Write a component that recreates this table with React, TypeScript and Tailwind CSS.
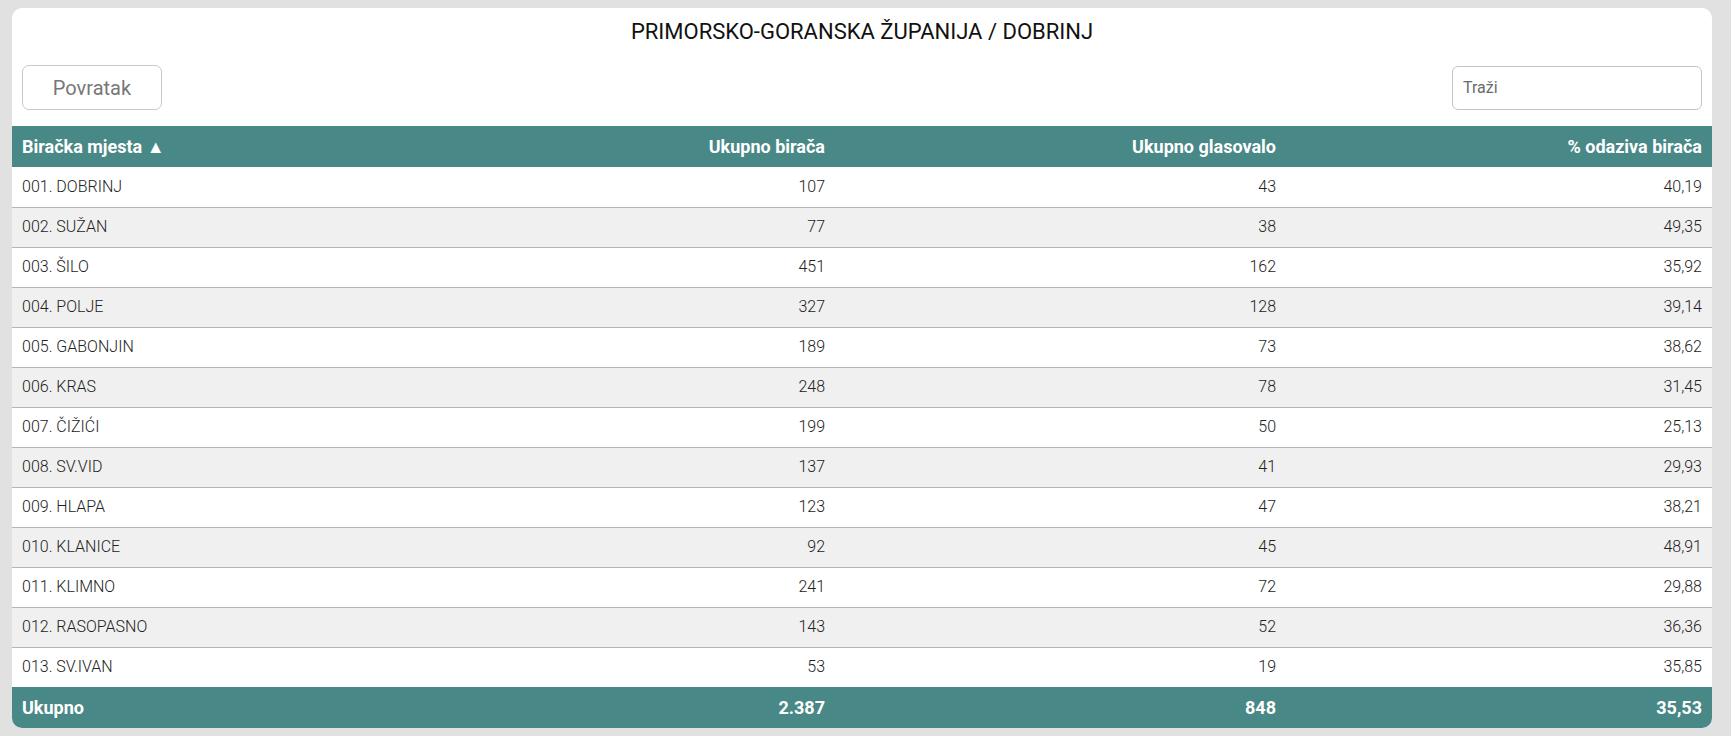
import React from 'react'

interface Row {
    name: string
    voters: string
    voted: string
    turnout: string
}

const rows: Row[] = [
    { name: '001. DOBRINJ', voters: '107', voted: '43', turnout: '40,19' },
    { name: '002. SUŽAN', voters: '77', voted: '38', turnout: '49,35' },
    { name: '003. ŠILO', voters: '451', voted: '162', turnout: '35,92' },
    { name: '004. POLJE', voters: '327', voted: '128', turnout: '39,14' },
    { name: '005. GABONJIN', voters: '189', voted: '73', turnout: '38,62' },
    { name: '006. KRAS', voters: '248', voted: '78', turnout: '31,45' },
    { name: '007. ČIŽIĆI', voters: '199', voted: '50', turnout: '25,13' },
    { name: '008. SV.VID', voters: '137', voted: '41', turnout: '29,93' },
    { name: '009. HLAPA', voters: '123', voted: '47', turnout: '38,21' },
    { name: '010. KLANICE', voters: '92', voted: '45', turnout: '48,91' },
    { name: '011. KLIMNO', voters: '241', voted: '72', turnout: '29,88' },
    { name: '012. RASOPASNO', voters: '143', voted: '52', turnout: '36,36' },
    { name: '013. SV.IVAN', voters: '53', voted: '19', turnout: '35,85' },
]

export default function App() {
    return (
        <div className="h-[736px] bg-[#e1e1e1] pt-[8px] pr-[19px] pb-[8px] pl-[12px] font-['Roboto',sans-serif]">
            <div className="flex h-[720px] flex-col overflow-hidden rounded-[10px] bg-white">
                <h1 className="pt-[9px] text-center text-[22px] leading-[30px] text-[#111]">
                    PRIMORSKO-GORANSKA ŽUPANIJA / DOBRINJ
                </h1>
                <div className="mt-[18px] flex items-center justify-between px-[10px]">
                    <button className="h-[45px] w-[140px] rounded-[7px] border border-[#c8c8c8] bg-white text-[20px] text-[#777]">
                        Povratak
                    </button>
                    <input
                        placeholder="Traži"
                        className="h-[44px] w-[250px] rounded-[6px] border border-[#c4c4c4] px-[10px] text-[16px] text-[#333] outline-none placeholder:text-[#6b6b6b]"
                    />
                </div>
                <table className="mt-[16px] w-full table-fixed border-collapse">
                    <colgroup>
                        <col className="w-[400px]" />
                        <col className="w-[423px]" />
                        <col className="w-[451px]" />
                        <col className="w-[426px]" />
                    </colgroup>
                    <thead>
                        <tr className="h-[41px] bg-[#488886] text-[18px] font-bold text-white">
                            <th className="px-[10px] text-left">Biračka mjesta ▲</th>
                            <th className="px-[10px] text-right">Ukupno birača</th>
                            <th className="px-[10px] text-right">Ukupno glasovalo</th>
                            <th className="px-[10px] text-right">% odaziva birača</th>
                        </tr>
                    </thead>
                    <tbody className="text-[16px] font-light text-[#222]">
                        {rows.map((r, i) => (
                            <tr
                                key={r.name}
                                className={
                                    'h-[40px] ' +
                                    (i % 2 === 1 ? 'bg-[#f0f0f0] ' : 'bg-white ') +
                                    (i < rows.length - 1 ? 'border-b border-[#b5b5b5]' : '')
                                }
                            >
                                <td className="px-[10px] text-left">{r.name}</td>
                                <td className="px-[10px] text-right">{r.voters}</td>
                                <td className="px-[10px] text-right">{r.voted}</td>
                                <td className="px-[10px] text-right">{r.turnout}</td>
                            </tr>
                        ))}
                    </tbody>
                    <tfoot>
                        <tr className="h-[41px] bg-[#488886] text-[18px] font-bold text-white">
                            <td className="px-[10px] text-left">Ukupno</td>
                            <td className="px-[10px] text-right">2.387</td>
                            <td className="px-[10px] text-right">848</td>
                            <td className="px-[10px] text-right">35,53</td>
                        </tr>
                    </tfoot>
                </table>
            </div>
        </div>
    )
}
